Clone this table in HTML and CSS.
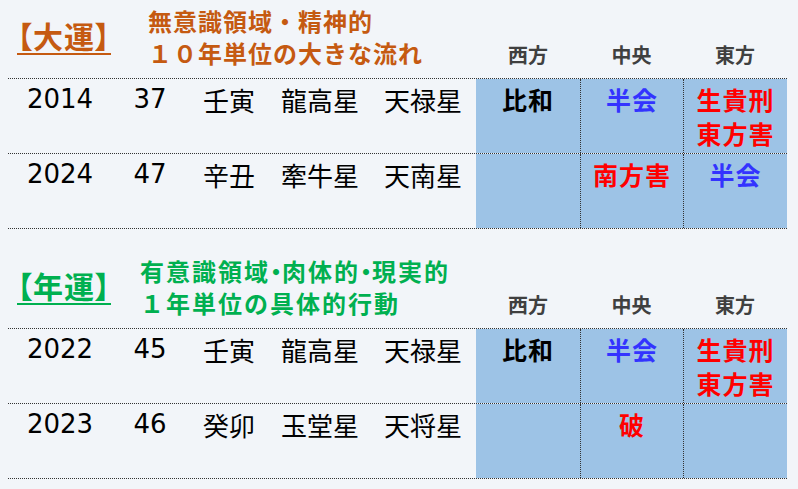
FILE: index.html
```html
<!DOCTYPE html>
<html lang="ja">
<head>
<meta charset="utf-8">
<title>大運・年運</title>
<link rel="stylesheet" href="styles.css">
</head>
<body>
<div class="page">
  <section class="block">
    <div class="head">
      <div class="title orange">【大運】</div>
      <div class="sub orange">
        <div class="l1">無意識領域・精神的</div>
        <div class="l2">１０年単位の大きな流れ</div>
      </div>
      <div class="colh">西方</div>
      <div class="colh">中央</div>
      <div class="colh">東方</div>
    </div>
    <div class="table">
      <div class="row">
        <div class="c num">2014</div>
        <div class="c num">37</div>
        <div class="c">壬寅</div>
        <div class="c">龍高星</div>
        <div class="c">天禄星</div>
        <div class="c b blk"><div class="ln">比和</div></div>
        <div class="c b blu sep"><div class="ln">半会</div></div>
        <div class="c b red sep"><div class="ln">生貴刑</div><div class="ln">東方害</div></div>
      </div>
      <div class="row">
        <div class="c num">2024</div>
        <div class="c num">47</div>
        <div class="c">辛丑</div>
        <div class="c">牽牛星</div>
        <div class="c">天南星</div>
        <div class="c b blk"></div>
        <div class="c b red sep"><div class="ln">南方害</div></div>
        <div class="c b blu sep"><div class="ln">半会</div></div>
      </div>
    </div>
  </section>

  <section class="block second">
    <div class="head">
      <div class="title green">【年運】</div>
      <div class="sub green">
        <div class="l1">有意識領域<span class="dot">・</span>肉体的<span class="dot">・</span>現実的</div>
        <div class="l2">１年単位の具体的行動</div>
      </div>
      <div class="colh">西方</div>
      <div class="colh">中央</div>
      <div class="colh">東方</div>
    </div>
    <div class="table">
      <div class="row">
        <div class="c num">2022</div>
        <div class="c num">45</div>
        <div class="c">壬寅</div>
        <div class="c">龍高星</div>
        <div class="c">天禄星</div>
        <div class="c b blk"><div class="ln">比和</div></div>
        <div class="c b blu sep"><div class="ln">半会</div></div>
        <div class="c b red sep"><div class="ln">生貴刑</div><div class="ln">東方害</div></div>
      </div>
      <div class="row">
        <div class="c num">2023</div>
        <div class="c num">46</div>
        <div class="c">癸卯</div>
        <div class="c">玉堂星</div>
        <div class="c">天将星</div>
        <div class="c b blk"></div>
        <div class="c b red sep"><div class="ln">破</div></div>
        <div class="c b blu sep"></div>
      </div>
    </div>
  </section>
</div>
</body>
</html>
```

FILE: styles.css
```css
html, body {
  margin: 0;
  padding: 0;
  background: #f2f5f9;
}
body {
  font-family: "Noto Sans CJK JP", "Noto Sans", sans-serif;
  color: #000;
}
.page {
  padding: 0 11px 0 8px;
  width: 779px;
}
.block {
  height: 250px;
}
.head {
  height: 78px;
  display: grid;
  grid-template-columns: 132px 336px 104px 103px 104px;
  align-items: end;
}
.title {
  align-self: start;
  justify-self: start;
  padding-top: 17px;
  margin-left: 9px;
  font-size: 30px;
  font-weight: bold;
  line-height: 36px;
  letter-spacing: 1px;
  font-feature-settings: "palt";
  text-decoration: underline;
  text-decoration-thickness: 2px;
  text-underline-offset: 5px;
}
.orange { color: #c55a11; }
.green { color: #00b050; }
.sub {
  align-self: start;
  padding-top: 5px;
  font-size: 24px;
  font-weight: bold;
  line-height: 32px;
  letter-spacing: 1px;
  margin-left: 8px;
  white-space: nowrap;
}
.second .sub {
  margin-left: 0;
  letter-spacing: 2px;
}
.dot {
  font-feature-settings: "palt";
  letter-spacing: 0;
}
.colh {
  text-align: center;
  font-size: 20px;
  font-weight: bold;
  color: #404040;
  line-height: 24px;
  padding-bottom: 11px;
}
.table {
  border-bottom: 1px dotted #333;
}
.row {
  display: grid;
  grid-template-columns: 104px 76px 82px 100px 106px 104px 103px 104px;
  height: 75px;
  border-top: 1px dotted #333;
  box-sizing: border-box;
}
.c {
  text-align: center;
  font-size: 26px;
  line-height: 33px;
  padding-top: 4px;
}
.num {
  font-family: "DejaVu Sans", "Noto Sans CJK JP", sans-serif;
}
.b {
  background: #9dc3e6;
  font-weight: bold;
  padding-top: 3px;
  font-size: 25px;
  letter-spacing: 1px;
}
.ln {
  height: 34px;
  line-height: 34px;
}
.sep { border-left: 1px dotted #333; }
.blk { color: #000; }
.blu { color: #3333ff; }
.red { color: #ff0000; }
```
